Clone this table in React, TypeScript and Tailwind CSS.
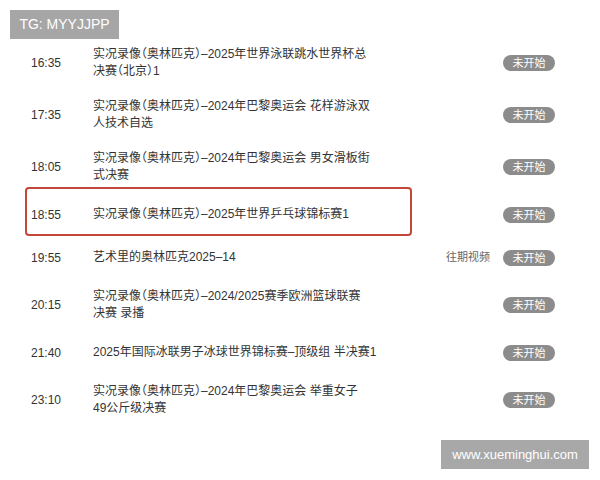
const rows = [
  { time: "16:35", lines: ["实况录像（奥林匹克）–2025年世界泳联跳水世界杯总", "决赛（北京）1"] },
  { time: "17:35", lines: ["实况录像（奥林匹克）–2024年巴黎奥运会 花样游泳双", "人技术自选"] },
  { time: "18:05", lines: ["实况录像（奥林匹克）–2024年巴黎奥运会 男女滑板街", "式决赛"] },
  { time: "18:55", lines: ["实况录像（奥林匹克）–2025年世界乒乓球锦标赛1"] },
  { time: "19:55", lines: ["艺术里的奥林匹克2025–14"], replay: true },
  { time: "20:15", lines: ["实况录像（奥林匹克）–2024/2025赛季欧洲篮球联赛", "决赛 录播"] },
  { time: "21:40", lines: ["2025年国际冰联男子冰球世界锦标赛–顶级组 半决赛1"] },
  { time: "23:10", lines: ["实况录像（奥林匹克）–2024年巴黎奥运会 举重女子", "49公斤级决赛"] },
]

export default function App() {
  return (
    <div className="relative w-[600px] h-[480px] overflow-hidden bg-white font-['Liberation_Sans','Noto_Sans_CJK_SC',sans-serif] text-[#333]">
      <div className="pt-[37px]">
        {rows.map((r) => (
          <div key={r.time} className="flex items-center min-h-[43px] py-[9px]">
            <div className="w-[62px] ml-[31px] text-[12px]">{r.time}</div>
            <div className="flex-1 text-[12px] leading-[17px] whitespace-nowrap [font-feature-settings:'halt']">
              {r.lines.map((l, i) => (
                <div key={i}>{l}</div>
              ))}
            </div>
            <div className="flex items-center justify-end gap-[13px] mr-[45px]">
              {r.replay && <span className="text-[11px] text-[#666]">往期视频</span>}
              <span className="w-[52px] h-[16px] rounded-full bg-[#8c8c8c] text-white text-[11px] leading-[16px] text-center">
                未开始
              </span>
            </div>
          </div>
        ))}
      </div>

      {/* highlight box */}
      <div className="absolute left-[25px] top-[187px] w-[387px] h-[49px] border-2 border-[#c2473a] rounded-[4px]" />

      {/* watermarks */}
      <div className="absolute left-[10px] top-[10px] w-[109px] h-[29px] bg-[#a6a6a6] text-white text-[14px] flex items-center justify-center">
        TG: MYYJJPP
      </div>
      <div className="absolute left-[441px] top-[440px] w-[148px] h-[29px] bg-[#a8a8a8] text-white text-[13px] flex items-center justify-center">
        www.xueminghui.com
      </div>
    </div>
  )
}
